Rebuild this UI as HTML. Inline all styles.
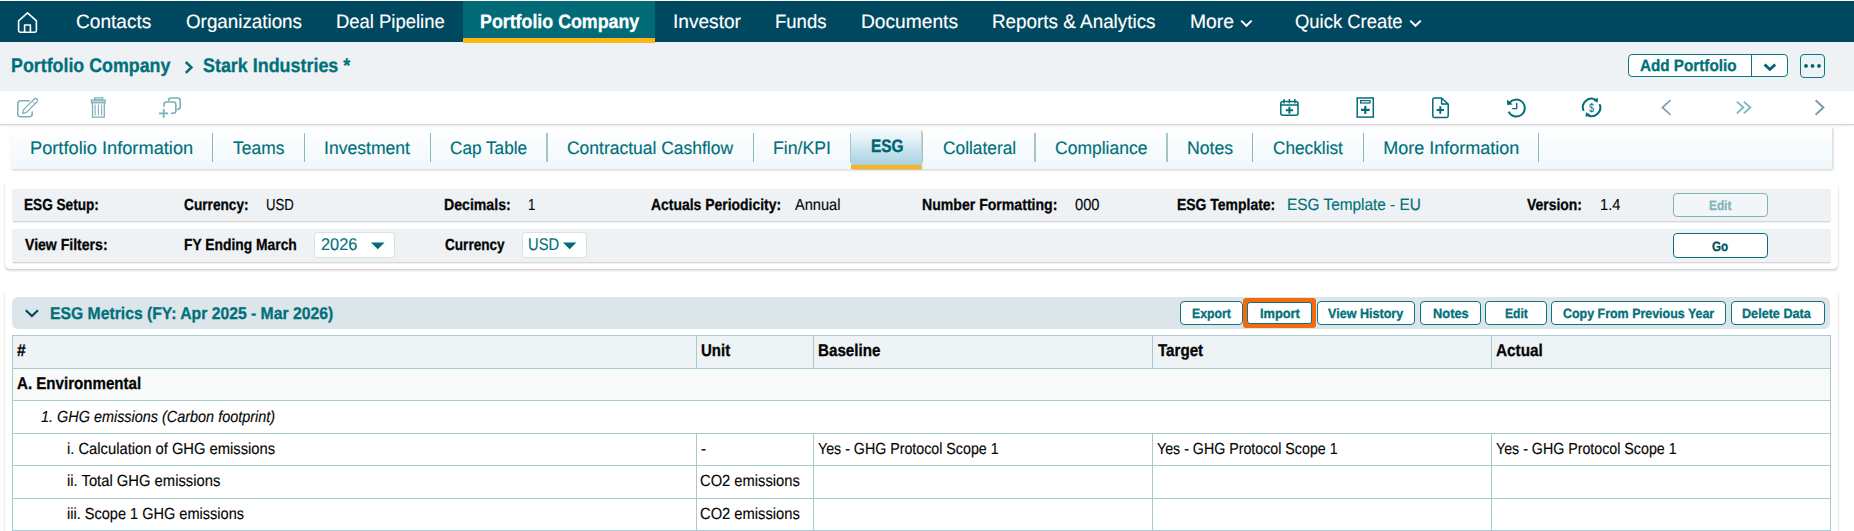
<!DOCTYPE html>
<html lang="en">
<head>
<meta charset="utf-8">
<title>Portfolio Company - Stark Industries - ESG</title>
<style>
*{box-sizing:border-box;margin:0;padding:0}
html,body{width:1854px;height:531px;overflow:hidden;background:#fff}
body{position:relative;font-family:"Liberation Sans",sans-serif;text-rendering:geometricPrecision}
.a{position:absolute}
.t{z-index:5;position:absolute;white-space:nowrap;line-height:24px;height:24px;transform-origin:0 0}
#nav{left:0;top:1px;width:1854px;height:41px;background:#00485f}
#navact{left:463px;top:1px;width:192px;height:41.75px;background:#006b76;z-index:2}
#navul{left:463px;top:37.6px;width:192px;height:5.15px;background:#fdb515;z-index:3}
#crumb{left:0;top:42px;width:1854px;height:49px;background:#eef2f5}
#tool{left:0;top:91px;width:1854px;height:33px;background:#fff}
#toolline{left:0;top:123.5px;width:1854px;height:1.5px;background:#d3d6d8;box-shadow:0 1px 2px rgba(0,0,0,.12)}
#tabs{left:10.5px;top:126.7px;width:1821px;height:42px;background:linear-gradient(#ffffff,#f0f8fc);box-shadow:0.5px 1px 2.5px rgba(0,0,0,.2)}
.sep{position:absolute;top:133px;width:1px;height:29px;background:#8fb6bd}
#tabact{left:851px;top:127.5px;width:70.3px;height:41.5px;background:linear-gradient(#fbfdfe 0%,#e3f1f6 30%,#c4e1ec 65%,#a6d2e3 100%);border-bottom:4px solid #fdb515;box-shadow:1.5px 1px 1.5px -0.5px rgba(0,0,0,.3)}
.panel{position:absolute;left:5px;width:1833px;background:#fff;border-radius:5px;box-shadow:0 2px 2.5px -0.5px rgba(0,0,0,.12),-0.8px 1px 1.2px -0.6px rgba(0,0,0,.045),0.8px 1px 1.2px -0.6px rgba(0,0,0,.045)}
.row{position:absolute;left:12px;width:1819px;background:#eef2f5;box-shadow:0.8px 1.5px 1.5px -0.5px rgba(0,0,0,.25)}
.btn{position:absolute;background:#fff;border:1px solid #0b7680;border-radius:4px}
.sel{position:absolute;background:#fff;border:1.8px solid #d4e2e6;border-radius:3.5px}
#band{left:12px;top:297px;width:1818px;height:32px;background:#dbe5ea;border-radius:6px}
.hl{position:absolute;height:1px;background:#a9c9cf;left:12px;width:1818px}
.vl{position:absolute;width:1px;background:#a9c9cf}
svg{position:absolute;overflow:visible;z-index:4}
</style>
</head>
<body>
<div class="a" id="nav"></div>
<div class="a" id="navact"></div>
<div class="a" id="navul"></div>
<div class="a" id="crumb"></div>
<div class="a" id="tool"></div>
<div class="a" id="toolline"></div>
<div class="a" id="tabs"></div>
<div class="a" id="tabact"></div>
<div class="sep" style="left:212px"></div>
<div class="sep" style="left:304px"></div>
<div class="sep" style="left:430px"></div>
<div class="sep" style="left:545.9px;width:2px;background:#a6c5cb"></div>
<div class="sep" style="left:753px"></div>
<div class="sep" style="left:1034px;width:2px;background:#a6c5cb"></div>
<div class="sep" style="left:1165.8px;width:2px;background:#a6c5cb"></div>
<div class="sep" style="left:1252px"></div>
<div class="sep" style="left:1363px"></div>
<div class="sep" style="left:1538px"></div>
<div class="sep" style="left:850px;background:#a9c3cc"></div>
<div class="sep" style="left:921.5px;width:1.5px;background:#a9c3cc"></div>

<!-- ESG setup panel -->
<div class="panel" style="top:182px;height:87px"></div>
<div class="row" style="top:189px;height:32px"></div>
<div class="row" style="top:229px;height:33px"></div>
<div class="btn" style="left:1672.5px;top:193px;width:95px;height:24px;background:#f3f6f8;border-color:#7fb2b9"></div>
<div class="btn" style="left:1672.5px;top:233px;width:95px;height:24.5px;border-color:#0b6f7a"></div>
<div class="sel" style="left:314.3px;top:232.3px;width:81.2px;height:26.1px"></div>
<div class="sel" style="left:522.2px;top:232.3px;width:65px;height:26.1px"></div>

<!-- metrics panel -->
<div class="panel" style="top:290.5px;height:260px"></div>
<div class="a" id="band"></div>
<div class="a" style="left:12px;top:335px;width:1818px;height:33px;background:#eef3f6"></div>
<div class="a" style="left:12px;top:368px;width:1818px;height:32.5px;background:#f8f9f9"></div>
<div class="hl" style="top:335px"></div>
<div class="hl" style="top:368px"></div>
<div class="hl" style="top:400px"></div>
<div class="hl" style="top:433px"></div>
<div class="hl" style="top:465px"></div>
<div class="hl" style="top:498px"></div>
<div class="hl" style="top:529.5px"></div>
<div class="vl" style="left:12px;top:335px;height:196px"></div>
<div class="vl" style="left:1829.5px;top:335px;height:196px"></div>
<div class="vl" style="left:696px;top:335px;height:33px"></div>
<div class="vl" style="left:813px;top:335px;height:33px"></div>
<div class="vl" style="left:1152px;top:335px;height:33px"></div>
<div class="vl" style="left:1490.5px;top:335px;height:33px"></div>
<div class="vl" style="left:696px;top:433px;height:98px"></div>
<div class="vl" style="left:813px;top:433px;height:98px"></div>
<div class="vl" style="left:1152px;top:433px;height:98px"></div>
<div class="vl" style="left:1490.5px;top:433px;height:98px"></div>

<!-- section buttons -->
<div class="btn" style="left:1180px;top:301px;width:62.5px;height:24px"></div>
<div class="a" style="left:1243px;top:297.5px;width:73px;height:30.5px;background:#f26b0f;border-radius:3px"></div>
<div class="btn" style="left:1247px;top:301.5px;width:65px;height:22.5px;border-radius:3px"></div>
<div class="btn" style="left:1316.5px;top:301px;width:98.5px;height:24px"></div>
<div class="btn" style="left:1419.5px;top:301px;width:61px;height:24px"></div>
<div class="btn" style="left:1485px;top:301px;width:61.5px;height:24px"></div>
<div class="btn" style="left:1550.75px;top:301px;width:175.5px;height:24px"></div>
<div class="btn" style="left:1730.5px;top:301px;width:94px;height:24px"></div>

<!-- add portfolio -->
<div class="btn" style="left:1628px;top:54px;width:159.5px;height:23px"></div>
<div class="a" style="left:1751px;top:54px;width:1px;height:23px;background:#0b7680"></div>
<div class="btn" style="left:1800px;top:54px;width:24.5px;height:23.5px;background:transparent"></div>

<svg class="a" style="left:0;top:0" width="1854" height="531" viewBox="0 0 1854 531" fill="none" stroke-linecap="butt" stroke-linejoin="miter">
<!-- home -->
<g stroke="#fff" stroke-width="1.6" stroke-linejoin="round">
<path d="M18.6 20.8 L27.5 12.9 L36.4 20.8 V30.6 Q36.4 32.2 34.8 32.2 H20.2 Q18.6 32.2 18.6 30.6 Z"/>
<path d="M24.6 32.2 V25 H30.4 V32.2"/>
</g>
<!-- nav chevrons -->
<g stroke="#fff" stroke-width="2">
<path d="M1241.2 20.6 L1246.4 25.8 L1251.6 20.6"/>
<path d="M1410.2 20.6 L1415.5 25.8 L1420.8 20.6"/>
</g>
<!-- breadcrumb chevron -->
<path d="M185.8 62 L191.4 67.4 L185.8 72.8" stroke="#006d78" stroke-width="2.5"/>
<!-- add portfolio chevron -->
<path d="M1764.6 64.4 L1769.9 69.4 L1775.2 64.4" stroke="#00606b" stroke-width="2.8"/>
<!-- dots -->
<g fill="#00606b" stroke="none"><circle cx="1806" cy="65.9" r="1.85"/><circle cx="1812.5" cy="65.9" r="1.85"/><circle cx="1819" cy="65.9" r="1.85"/></g>

<!-- toolbar left icons (light) -->
<g stroke="#7ab0b7" stroke-width="1.5">
<!-- edit -->
<path d="M29.2 100.8 H20.8 Q17.8 100.8 17.8 103.8 V113.8 Q17.8 116.8 20.8 116.8 H29.2 Q32.2 116.8 32.2 113.8 V112" stroke-linecap="round"/>
<path d="M22.6 113.4 L23.4 109.8 L34 99.2 Q35.6 97.8 37 99.2 Q38.2 100.6 36.9 102 L26.2 112.6 Z" stroke-width="1.2" stroke-linejoin="round"/>
<path d="M32 101.2 L34.9 104" stroke-width="1"/>
<!-- trash -->
<rect x="94.6" y="97.8" width="8" height="2.2" stroke-width="1.2"/>
<rect x="91.4" y="100" width="13.8" height="2.8" fill="#b9d6da" stroke-width="1.2"/>
<path d="M92.5 102.8 V117.2 H104.3 V102.8" stroke-width="1.3"/>
<path d="M95.1 104.4 V115.6 M98.4 104.4 V115.6 M101.6 104.4 V115.6" stroke-width="1.05"/>
<!-- copy -->
<path d="M168.6 101 V100.4 Q168.6 98 171 98 H177.8 Q180.2 98 180.2 100.4 V106.8 Q180.2 109.2 177.8 109.2 H176.6" stroke-width="1.6"/>
<path d="M164 106.8 V104.4 Q164 102 166.4 102 H173.4 Q175.8 102 175.8 104.4 V110.8 Q175.8 113.2 173.4 113.2 H171" stroke-width="1.6"/>
<path d="M159 113.4 H168.2 M163.7 109 V117.8" stroke-width="1.8"/>
</g>

<!-- toolbar right icons -->
<g stroke="#006d78" stroke-width="1.5">
<!-- calendar -->
<rect x="1280.8" y="101.6" width="17.2" height="13.6" rx="2"/>
<path d="M1280.8 105 H1298"/>
<path d="M1284 99 V103.6 M1289.4 99 V103.6 M1294.9 99 V103.6" stroke-width="1.4"/>
<path d="M1285.8 110.2 H1293 M1289.4 106.8 V113.8" stroke-width="2"/>
<!-- doc minus plus -->
<rect x="1357.2" y="98" width="16.1" height="19.1"/>
<rect x="1360.6" y="100.6" width="9.4" height="2.4" stroke-width="1.2"/>
<path d="M1361 109.9 H1369.7 M1365.3 105.9 V114" stroke-width="2.1"/>
<!-- file plus -->
<path d="M1441.6 98 H1434.2 Q1432.8 98 1432.8 99.4 V116 Q1432.8 117.4 1434.2 117.4 H1446.8 Q1448.2 117.4 1448.2 116 V104 L1441.6 98 V104 H1448.2" stroke-linejoin="round"/>
<path d="M1436.6 110 H1444 M1440.3 106.3 V113.7" stroke-width="2"/>
<!-- history -->
<path d="M1509.2 103.4 A8.5 8.5 0 1 1 1508.6 111.6" stroke-width="1.9"/>
<path d="M1507 99.6 L1507.2 105 L1512.6 104.6 Z" fill="#006d78" stroke="none"/>
<path d="M1516.7 103 V108.6 H1512.2" stroke-width="1.4"/>
<!-- dollar refresh -->
<path d="M1583.6 110.8 A8.6 8.6 0 0 1 1596.2 100.2" stroke-width="2"/>
<path d="M1599.6 104.2 A8.6 8.6 0 0 1 1587.2 114.9" stroke-width="2"/>
<path d="M1597.9 97.8 L1597.7 102.8 L1593.4 100.6 Z" fill="#006d78" stroke="none"/>
<path d="M1585.6 117.2 L1585.9 112.2 L1590.2 114.4 Z" fill="#006d78" stroke="none"/>
</g>
<text transform="translate(1591.6 111.9) scale(0.8 1.08)" font-family="Liberation Sans, sans-serif" font-size="11.5" fill="#006d78" stroke="none" text-anchor="middle">$</text>
<!-- arrows -->
<path d="M1670.6 100.2 L1662.4 107.5 L1670.6 114.8" stroke="#7fa7b0" stroke-width="1.8"/>
<path d="M1736.9 101.6 L1743.4 107.5 L1736.9 113.4 M1743.8 101.6 L1750.3 107.5 L1743.8 113.4" stroke="#7fb8bd" stroke-width="1.9"/>
<path d="M1815.6 100.2 L1823.4 107.5 L1815.6 114.8" stroke="#7a9fab" stroke-width="2"/>

<!-- select arrows -->
<path d="M371 242.5 H384.6 L377.8 249.3 Z" fill="#006d78"/>
<path d="M563 242.5 H576.4 L569.7 249.2 Z" fill="#006d78"/>
<!-- section chevron -->
<path d="M25.8 310.2 L31.9 316 L38 310.2" stroke="#00475c" stroke-width="2.1"/>
</svg>


<span class="t" style="left:76.11px;top:10px;font-size:19.4px;-webkit-text-stroke:0.15px;color:#ffffff;transform:scaleX(0.9841);">Contacts</span>
<span class="t" style="left:186.18px;top:10px;font-size:19.4px;-webkit-text-stroke:0.15px;color:#ffffff;transform:scaleX(0.9694);">Organizations</span>
<span class="t" style="left:336.48px;top:10px;font-size:19.4px;-webkit-text-stroke:0.15px;color:#ffffff;transform:scaleX(0.9512);">Deal Pipeline</span>
<span class="t" style="left:673.03px;top:10px;font-size:19.4px;-webkit-text-stroke:0.15px;color:#ffffff;transform:scaleX(0.9848);">Investor</span>
<span class="t" style="left:774.98px;top:10px;font-size:19.4px;-webkit-text-stroke:0.15px;color:#ffffff;transform:scaleX(0.9553);">Funds</span>
<span class="t" style="left:860.67px;top:10px;font-size:19.4px;-webkit-text-stroke:0.15px;color:#ffffff;transform:scaleX(0.9892);">Documents</span>
<span class="t" style="left:991.95px;top:10px;font-size:19.4px;-webkit-text-stroke:0.15px;color:#ffffff;transform:scaleX(0.9727);">Reports &amp; Analytics</span>
<span class="t" style="left:1189.67px;top:10px;font-size:19.4px;-webkit-text-stroke:0.15px;color:#ffffff;transform:scaleX(0.9948);">More</span>
<span class="t" style="left:1295.20px;top:10px;font-size:19.4px;-webkit-text-stroke:0.15px;color:#ffffff;transform:scaleX(0.9506);">Quick Create</span>
<span class="t" style="left:479.77px;top:10px;font-size:19.4px;font-weight:700;-webkit-text-stroke:0.3px;color:#ffffff;transform:scaleX(0.9182);">Portfolio Company</span>
<span class="t" style="left:10.77px;top:54px;font-size:19.6px;font-weight:700;-webkit-text-stroke:0.3px;color:#00707a;transform:scaleX(0.9091);">Portfolio Company</span>
<span class="t" style="left:202.70px;top:54px;font-size:19.6px;font-weight:700;-webkit-text-stroke:0.3px;color:#00707a;transform:scaleX(0.9136);">Stark Industries *</span>
<span class="t" style="left:1639.96px;top:54px;font-size:16.5px;font-weight:700;-webkit-text-stroke:0.3px;color:#00707a;transform:scaleX(0.9236);">Add Portfolio</span>
<span class="t" style="left:30.26px;top:136px;font-size:18px;-webkit-text-stroke:0.15px;color:#00707a;transform:scaleX(1.0130);">Portfolio Information</span>
<span class="t" style="left:233.35px;top:136px;font-size:18px;-webkit-text-stroke:0.15px;color:#00707a;transform:scaleX(0.9694);">Teams</span>
<span class="t" style="left:323.91px;top:136px;font-size:18px;-webkit-text-stroke:0.15px;color:#00707a;transform:scaleX(0.9765);">Investment</span>
<span class="t" style="left:450.46px;top:136px;font-size:18px;-webkit-text-stroke:0.15px;color:#00707a;transform:scaleX(0.9545);">Cap Table</span>
<span class="t" style="left:567.45px;top:136px;font-size:18px;-webkit-text-stroke:0.15px;color:#00707a;transform:scaleX(0.9704);">Contractual Cashflow</span>
<span class="t" style="left:773.05px;top:136px;font-size:18px;-webkit-text-stroke:0.15px;color:#00707a;transform:scaleX(0.9811);">Fin/KPI</span>
<span class="t" style="left:942.71px;top:136px;font-size:18px;-webkit-text-stroke:0.15px;color:#00707a;transform:scaleX(0.9623);">Collateral</span>
<span class="t" style="left:1055.45px;top:136px;font-size:18px;-webkit-text-stroke:0.15px;color:#00707a;transform:scaleX(0.9727);">Compliance</span>
<span class="t" style="left:1187.05px;top:136px;font-size:18px;-webkit-text-stroke:0.15px;color:#00707a;transform:scaleX(0.9826);">Notes</span>
<span class="t" style="left:1272.96px;top:136px;font-size:18px;-webkit-text-stroke:0.15px;color:#00707a;transform:scaleX(0.9574);">Checklist</span>
<span class="t" style="left:1383.28px;top:136px;font-size:18px;-webkit-text-stroke:0.15px;color:#00707a;">More Information</span>
<span class="t" style="left:870.53px;top:134px;font-size:18px;font-weight:700;-webkit-text-stroke:0.3px;color:#00626d;transform:scaleX(0.8588);">ESG</span>
<span class="t" style="left:24.17px;top:194px;font-size:16px;font-weight:700;-webkit-text-stroke:0.3px;color:#050505;transform:scaleX(0.8507);">ESG Setup:</span>
<span class="t" style="left:184.41px;top:194px;font-size:16px;font-weight:700;-webkit-text-stroke:0.3px;color:#050505;transform:scaleX(0.8551);">Currency:</span>
<span class="t" style="left:265.64px;top:194px;font-size:16px;-webkit-text-stroke:0.15px;color:#050505;transform:scaleX(0.8227);">USD</span>
<span class="t" style="left:444.39px;top:194px;font-size:16px;font-weight:700;-webkit-text-stroke:0.3px;color:#050505;transform:scaleX(0.8822);">Decimals:</span>
<span class="t" style="left:528.16px;top:194px;font-size:16px;-webkit-text-stroke:0.15px;color:#050505;transform:scaleX(0.8200);">1</span>
<span class="t" style="left:651.23px;top:194px;font-size:16px;font-weight:700;-webkit-text-stroke:0.3px;color:#050505;transform:scaleX(0.8707);">Actuals Periodicity:</span>
<span class="t" style="left:794.68px;top:194px;font-size:16px;-webkit-text-stroke:0.15px;color:#050505;transform:scaleX(0.9126);">Annual</span>
<span class="t" style="left:922.39px;top:194px;font-size:16px;font-weight:700;-webkit-text-stroke:0.3px;color:#050505;transform:scaleX(0.8805);">Number Formatting:</span>
<span class="t" style="left:1074.87px;top:194px;font-size:16px;-webkit-text-stroke:0.15px;color:#050505;transform:scaleX(0.9189);">000</span>
<span class="t" style="left:1176.65px;top:194px;font-size:16px;font-weight:700;-webkit-text-stroke:0.3px;color:#050505;transform:scaleX(0.8719);">ESG Template:</span>
<span class="t" style="left:1287.17px;top:193px;font-size:16.5px;-webkit-text-stroke:0.15px;color:#00707a;transform:scaleX(0.9318);">ESG Template - EU</span>
<span class="t" style="left:1527.43px;top:194px;font-size:16px;font-weight:700;-webkit-text-stroke:0.3px;color:#050505;transform:scaleX(0.8710);">Version:</span>
<span class="t" style="left:1599.79px;top:194px;font-size:16px;-webkit-text-stroke:0.15px;color:#050505;transform:scaleX(0.9151);">1.4</span>
<span class="t" style="left:1709.30px;top:194px;font-size:13.5px;font-weight:700;-webkit-text-stroke:0.3px;color:#82b4bb;transform:scaleX(0.8754);">Edit</span>
<span class="t" style="left:24.68px;top:234px;font-size:16px;font-weight:700;-webkit-text-stroke:0.3px;color:#050505;transform:scaleX(0.8791);">View Filters:</span>
<span class="t" style="left:184.16px;top:234px;font-size:16px;font-weight:700;-webkit-text-stroke:0.3px;color:#050505;transform:scaleX(0.8651);">FY Ending March</span>
<span class="t" style="left:320.59px;top:233px;font-size:17px;-webkit-text-stroke:0.15px;color:#00707a;transform:scaleX(0.9588);">2026</span>
<span class="t" style="left:444.66px;top:234px;font-size:16px;font-weight:700;-webkit-text-stroke:0.3px;color:#050505;transform:scaleX(0.8490);">Currency</span>
<span class="t" style="left:527.54px;top:233px;font-size:17px;-webkit-text-stroke:0.15px;color:#00707a;transform:scaleX(0.8655);">USD</span>
<span class="t" style="left:1712.42px;top:235px;font-size:13.5px;font-weight:700;-webkit-text-stroke:0.3px;color:#00505e;transform:scaleX(0.8645);">Go</span>
<span class="t" style="left:49.81px;top:302px;font-size:17px;font-weight:700;-webkit-text-stroke:0.3px;color:#00707a;transform:scaleX(0.9251);">ESG Metrics (FY: Apr 2025 - Mar 2026)</span>
<span class="t" style="left:1192.48px;top:302px;font-size:13.5px;font-weight:700;-webkit-text-stroke:0.3px;color:#00707a;transform:scaleX(0.9065);">Export</span>
<span class="t" style="left:1259.69px;top:302px;font-size:13.5px;font-weight:700;-webkit-text-stroke:0.3px;color:#00707a;transform:scaleX(0.9496);">Import</span>
<span class="t" style="left:1328.08px;top:302px;font-size:13.5px;font-weight:700;-webkit-text-stroke:0.3px;color:#00707a;transform:scaleX(0.9310);">View History</span>
<span class="t" style="left:1432.95px;top:302px;font-size:13.5px;font-weight:700;-webkit-text-stroke:0.3px;color:#00707a;transform:scaleX(0.9521);">Notes</span>
<span class="t" style="left:1504.89px;top:302px;font-size:13.5px;font-weight:700;-webkit-text-stroke:0.3px;color:#00707a;transform:scaleX(0.8955);">Edit</span>
<span class="t" style="left:1563.19px;top:302px;font-size:13.5px;font-weight:700;-webkit-text-stroke:0.3px;color:#00707a;transform:scaleX(0.9217);">Copy From Previous Year</span>
<span class="t" style="left:1742.46px;top:302px;font-size:13.5px;font-weight:700;-webkit-text-stroke:0.3px;color:#00707a;transform:scaleX(0.9352);">Delete Data</span>
<span class="t" style="left:17.33px;top:339px;font-size:17px;font-weight:700;-webkit-text-stroke:0.3px;color:#050505;transform:scaleX(0.9173);">#</span>
<span class="t" style="left:700.64px;top:339px;font-size:17px;font-weight:700;-webkit-text-stroke:0.3px;color:#050505;transform:scaleX(0.8827);">Unit</span>
<span class="t" style="left:817.84px;top:339px;font-size:17px;font-weight:700;-webkit-text-stroke:0.3px;color:#050505;transform:scaleX(0.8926);">Baseline</span>
<span class="t" style="left:1158.19px;top:339px;font-size:17px;font-weight:700;-webkit-text-stroke:0.3px;color:#050505;transform:scaleX(0.8898);">Target</span>
<span class="t" style="left:1495.96px;top:339px;font-size:17px;font-weight:700;-webkit-text-stroke:0.3px;color:#050505;transform:scaleX(0.9000);">Actual</span>
<span class="t" style="left:17.21px;top:372px;font-size:17px;font-weight:700;-webkit-text-stroke:0.3px;color:#050505;transform:scaleX(0.8883);">A. Environmental</span>
<span class="t" style="left:41.25px;top:406px;font-size:16px;-webkit-text-stroke:0.15px;font-style:italic;color:#050505;transform:scaleX(0.9015);">1. GHG emissions (Carbon footprint)</span>
<span class="t" style="left:66.59px;top:438px;font-size:16px;-webkit-text-stroke:0.15px;color:#050505;transform:scaleX(0.9215);">i. Calculation of GHG emissions</span>
<span class="t" style="left:700.55px;top:438px;font-size:16px;-webkit-text-stroke:0.15px;color:#050505;transform:scaleX(0.9382);">-</span>
<span class="t" style="left:817.89px;top:438px;font-size:16px;-webkit-text-stroke:0.15px;color:#050505;transform:scaleX(0.8893);">Yes - GHG Protocol Scope 1</span>
<span class="t" style="left:1157.14px;top:438px;font-size:16px;-webkit-text-stroke:0.15px;color:#050505;transform:scaleX(0.8893);">Yes - GHG Protocol Scope 1</span>
<span class="t" style="left:1496.14px;top:438px;font-size:16px;-webkit-text-stroke:0.15px;color:#050505;transform:scaleX(0.8893);">Yes - GHG Protocol Scope 1</span>
<span class="t" style="left:66.59px;top:470px;font-size:16px;-webkit-text-stroke:0.15px;color:#050505;transform:scaleX(0.9236);">ii. Total GHG emissions</span>
<span class="t" style="left:700.49px;top:470px;font-size:16px;-webkit-text-stroke:0.15px;color:#050505;transform:scaleX(0.9200);">CO2 emissions</span>
<span class="t" style="left:66.60px;top:503px;font-size:16px;-webkit-text-stroke:0.15px;color:#050505;transform:scaleX(0.9089);">iii. Scope 1 GHG emissions</span>
<span class="t" style="left:700.49px;top:503px;font-size:16px;-webkit-text-stroke:0.15px;color:#050505;transform:scaleX(0.9200);">CO2 emissions</span>
</body>
</html>
